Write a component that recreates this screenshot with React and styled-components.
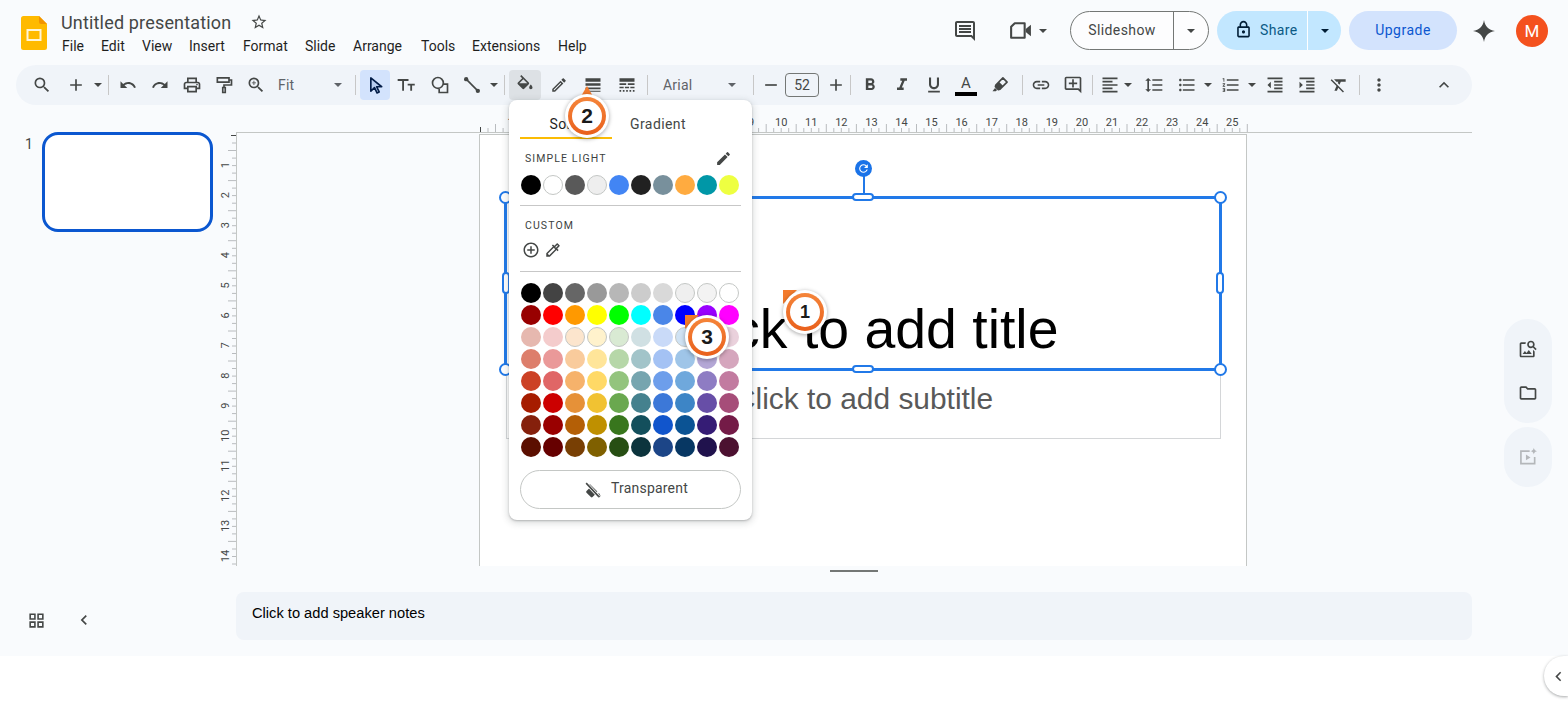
import React from "react";
import styled, { createGlobalStyle } from "styled-components";
import {
  MdSearch, MdAdd, MdUndo, MdRedo, MdOutlinePrint, MdZoomIn,
  MdOutlineEdit, MdLineWeight, MdLineStyle, MdFormatBold, MdFormatItalic, MdFormatUnderlined, MdLink,
  MdOutlineAddComment, MdFormatAlignLeft, MdFormatLineSpacing, MdFormatListBulleted, MdFormatListNumbered,
  MdFormatIndentDecrease, MdFormatIndentIncrease, MdFormatClear, MdMoreVert, MdExpandLess, MdOutlineComment,
  MdStarBorder, MdOutlineLock, MdOutlineGridView, MdChevronLeft, MdOutlineFolder,
  MdOutlineImageSearch, MdAddCircleOutline, MdOutlineColorize, MdEdit, MdRefresh, MdRemove,
} from "react-icons/md";

const Global = createGlobalStyle`
  html, body { margin: 0; padding: 0; background: #fff; }
  * { box-sizing: border-box; }
  body { font-family: Roboto, "Liberation Sans", sans-serif; }
`;

const Root = styled.div`
  position: relative;
  width: 1568px;
  height: 704px;
  overflow: hidden;
  display: flex;
  flex-direction: column;
  background: #f9fbfd;
`;

/* ---------- header ---------- */
const Header = styled.header`
  height: 65px;
  flex: none;
  display: flex;
  padding: 0 20px 0 21px;
`;
const Logo = styled.svg`
  width: 26px;
  height: 34px;
  margin-top: 16px;
  flex: none;
`;
const TitleBlock = styled.div`
  margin-left: 14px;
  padding-top: 11px;
`;
const TitleRow = styled.div`
  display: flex;
  align-items: center;
  height: 22px;
`;
const DocTitle = styled.span`
  font-size: 18px;
  color: #444746;
  width: 189px;
  letter-spacing: 0.17px;
`;
const Menu = styled.nav`
  display: flex;
  margin-top: 3px;
  margin-left: 1px;
`;
const MenuItem = styled.span`
  font-size: 14px;
  line-height: 20px;
  color: #1f1f1f;
  width: ${(p) => p.$w}px;
`;
const HeaderRight = styled.div`
  margin-left: auto;
  margin-top: 11px;
  height: 39px;
  display: flex;
  align-items: center;
`;
const Slot = styled.span`
  width: ${(p) => p.$w || 32}px;
  margin-left: ${(p) => p.$ml || 0}px;
  height: 30px;
  flex: none;
  display: flex;
  align-items: center;
  justify-content: center;
  color: ${(p) => p.$color || "#444746"};
  font-size: ${(p) => p.$size || 20}px;
`;
const SplitButton = styled.div`
  display: flex;
  height: 39px;
  border-radius: 20px;
  flex: none;
  overflow: hidden;
  margin-left: ${(p) => p.$ml}px;
`;
const SlideshowShell = styled(SplitButton)`
  border: 1px solid #747775;
  background: #fdfdfe;
  color: #444746;
`;
const SlideshowMain = styled.span`
  width: 103px;
  border-right: 1px solid #747775;
  display: flex;
  align-items: center;
  justify-content: center;
  font-size: 14px;
  letter-spacing: 0.4px;
  padding-bottom: 2px;
`;
const SlideshowDrop = styled.span`
  flex: 1;
  width: 34px;
  display: flex;
  align-items: center;
  justify-content: center;
`;
const ShareShell = styled(SplitButton)`
  background: #c2e7ff;
  color: #0b5a85;
`;
const ShareMain = styled.span`
  width: 91px;
  border-right: 1px solid #fff;
  display: flex;
  align-items: center;
  padding: 0 0 2px 17px;
  gap: 7px;
  font-size: 14px;
  letter-spacing: 0.35px;
  svg { color: #001d35; font-size: 19px; }
`;
const ShareDrop = styled.span`
  width: 33px;
  display: flex;
  align-items: center;
  justify-content: center;
  color: #001d35;
`;
const UpgradeBtn = styled.span`
  width: 108px;
  height: 39px;
  margin-left: 8px;
  padding-bottom: 2px;
  border-radius: 20px;
  background: #d3e3fd;
  color: #0b57d0;
  font-size: 14px;
  letter-spacing: 0.5px;
  display: flex;
  align-items: center;
  justify-content: center;
`;
const Avatar = styled.span`
  width: 32px;
  height: 32px;
  margin-left: 20px;
  border-radius: 50%;
  background: #f4511e;
  color: #fff;
  font-size: 17px;
  display: flex;
  align-items: center;
  justify-content: center;
`;

/* ---------- toolbar ---------- */
const Toolbar = styled.div`
  height: 40px;
  flex: none;
  margin: 0 96px 0 16px;
  padding-left: 10px;
  border-radius: 20px;
  background: #f0f4f9;
  display: flex;
  align-items: center;
`;
const Btn = styled.span`
  width: ${(p) => p.$w || 32}px;
  margin-left: ${(p) => p.$ml || 0}px;
  height: 30px;
  flex: none;
  border-radius: 4px;
  display: flex;
  align-items: center;
  justify-content: center;
  color: ${(p) => (p.$active === "blue" ? "#041e49" : "#444746")};
  background: ${(p) =>
    p.$active === "blue" ? "#d3e3fd" : p.$active === "grey" ? "#dde1e5" : "transparent"};
  font-size: ${(p) => p.$size || 20}px;
`;
const Sep = styled.span`
  width: 1px;
  height: 20px;
  flex: none;
  background: #c7c7c7;
  margin-left: ${(p) => p.$l}px;
  margin-right: ${(p) => p.$r}px;
`;
const SelectBox = styled.span`
  width: ${(p) => p.$w}px;
  height: 30px;
  flex: none;
  display: flex;
  align-items: center;
  justify-content: space-between;
  padding: 0 ${(p) => p.$pr}px 0 ${(p) => p.$pl}px;
  font-size: 14px;
  color: #5f6368;
  letter-spacing: 0.2px;
`;
const SizeInput = styled.span`
  width: 34px;
  height: 24px;
  flex: none;
  border: 1px solid #747775;
  border-radius: 4px;
  display: flex;
  align-items: center;
  justify-content: center;
  font-size: 14px;
  color: #444746;
`;
const TextColorBtn = styled(Btn)`
  flex-direction: column;
  justify-content: flex-start;
  font-size: 15px;
  line-height: 16px;
  padding-top: 5px;
`;
const ColorBar = styled.i`
  display: block;
  width: 22px;
  height: 4px;
  background: #000;
  margin-top: 1px;
`;

const CaretSvg = styled.svg`
  width: 8px;
  height: 4px;
  fill: currentColor;
  flex: none;
`;
const Caret = () => (
  <CaretSvg viewBox="0 0 8 4">
    <path d="M0 0h8L4 4z" />
  </CaretSvg>
);

/* ---------- main ---------- */
const Main = styled.div`
  height: 461px;
  flex: none;
  display: flex;
`;
const Filmstrip = styled.aside`
  width: 216px;
  flex: none;
  display: flex;
  padding: 27px 0 0 25px;
`;
const SlideNumber = styled.span`
  font-size: 14px;
  line-height: 22px;
  margin-top: 1px;
  color: #444746;
  width: 17px;
`;
const Thumb = styled.div`
  width: 171px;
  height: 100px;
  border: 3px solid #0b57d0;
  border-radius: 16px;
  background: #fff;
`;
const Workspace = styled.div`
  width: 1256px;
  flex: none;
  display: flex;
  flex-direction: column;
`;
const RulerH = styled.svg`
  display: block;
  width: 1236px;
  height: 28px;
  margin-left: 20px;
  flex: none;
`;
const WorkRow = styled.div`
  flex: 1;
  display: flex;
  min-height: 0;
`;
const RulerV = styled.svg`
  display: block;
  width: 21px;
  height: 433px;
  flex: none;
`;
const Canvas = styled.div`
  flex: 1;
  overflow: hidden;
  padding: 1px 0 0 242px;
`;
const Slide = styled.div`
  position: relative;
  width: 768px;
  height: 480px;
  background: #fff;
  border: 1px solid #c4c7c5;
`;
const TitleBox = styled.div`
  position: absolute;
  left: 24px;
  top: 61px;
  width: 718px;
  height: 175px;
  border: 3px solid #2179e8;
  display: flex;
  align-items: flex-end;
  justify-content: center;
  font-family: "Liberation Sans", Arial, sans-serif;
  font-size: 55.4px;
  line-height: 64px;
  color: #000;
  padding-bottom: 7px;
`;
const SubtitleBox = styled.div`
  position: absolute;
  left: 26px;
  top: 234px;
  width: 715px;
  height: 70px;
  border: 1px solid #d4d6d8;
  border-top: none;
  display: flex;
  justify-content: center;
  padding-top: 13px;
  font-family: "Liberation Sans", Arial, sans-serif;
  font-size: 29.9px;
  line-height: 34px;
  color: #595959;
`;
const Corner = styled.i`
  position: absolute;
  width: 13px;
  height: 13px;
  border-radius: 50%;
  background: #fff;
  border: 2px solid #2179e8;
  ${(p) => (p.$x === "l" ? "left: -8px;" : "right: -8px;")}
  ${(p) => (p.$y === "t" ? "top: -8px;" : "bottom: -8px;")}
`;
const PillH = styled.i`
  position: absolute;
  left: 345px;
  width: 22px;
  height: 8px;
  border-radius: 4px;
  background: #fff;
  border: 2px solid #2179e8;
  ${(p) => (p.$y === "t" ? "top: -6px;" : "bottom: -5px;")}
`;
const PillV = styled.i`
  position: absolute;
  top: 73px;
  width: 8px;
  height: 22px;
  border-radius: 4px;
  background: #fff;
  border: 2px solid #2179e8;
  ${(p) => (p.$x === "l" ? "left: -5px;" : "right: -5px;")}
`;
const RotateStem = styled.i`
  position: absolute;
  left: 355.5px;
  top: -23px;
  width: 2px;
  height: 17px;
  background: #2179e8;
`;
const RotateHandle = styled.span`
  position: absolute;
  left: 348px;
  top: -39px;
  width: 17px;
  height: 17px;
  border-radius: 50%;
  background: #1a73e8;
  color: #fff;
  font-size: 13px;
  display: flex;
  align-items: center;
  justify-content: center;
`;
const RailCol = styled.div`
  width: 96px;
  flex: none;
  padding: 214px 0 0 32px;
  display: flex;
  flex-direction: column;
  gap: 4px;
`;
const Rail = styled.div`
  width: 48px;
  height: ${(p) => p.$h}px;
  border-radius: 24px;
  background: #f0f4f9;
  display: flex;
  flex-direction: column;
  align-items: center;
  justify-content: center;
  gap: ${(p) => p.$gap || 0}px;
  font-size: 20px;
  color: ${(p) => p.$color || "#444746"};
`;
const RailIcon = styled.span`
  height: 20px;
  font-size: ${(p) => p.$size || 20}px;
  display: flex;
  align-items: center;
`;

/* ---------- notes ---------- */
const NotesBar = styled.div`
  height: 90px;
  flex: none;
  display: flex;
`;
const NotesLeft = styled.div`
  width: 236px;
  flex: none;
  display: flex;
  align-items: flex-start;
  padding: 44px 0 0 26px;
  color: #444746;
`;
const NotesLeftIcon = styled.span`
  width: ${(p) => p.$w}px;
  font-size: ${(p) => p.$size}px;
  margin-left: ${(p) => p.$ml || 0}px;
  height: 20px;
  display: flex;
  align-items: center;
  justify-content: center;
`;
const NotesCol = styled.div`
  flex: 1;
  margin-right: 96px;
  display: flex;
  flex-direction: column;
  align-items: center;
`;
const DragHandle = styled.i`
  width: 48px;
  height: 2px;
  margin-top: 4px;
  background: #747775;
`;
const NotesBox = styled.div`
  align-self: stretch;
  height: 48px;
  margin-top: 20px;
  border-radius: 8px;
  background: #f0f4f9;
  padding: 12px 16px;
  font-family: "Liberation Sans", Arial, sans-serif;
  font-size: 14.67px;
  line-height: 18px;
  color: #000;
`;
const Footer = styled.div`
  flex: 1;
  background: #fff;
  display: flex;
  justify-content: flex-end;
  align-items: flex-start;
`;
const SideToggle = styled.span`
  width: 24px;
  height: 40px;
  border-radius: 20px 0 0 20px;
  background: #fff;
  box-shadow: 0 1px 3px rgba(60, 64, 67, 0.45);
  display: flex;
  align-items: center;
  padding-left: 5px;
  color: #444746;
  font-size: 19px;
`;

/* ---------- fill popup ---------- */
const Popup = styled.div`
  position: absolute;
  left: 509px;
  top: 100px;
  width: 243px;
  height: 420px;
  background: #fff;
  border-radius: 8px;
  box-shadow: 0 2px 6px 2px rgba(60, 64, 67, 0.15), 0 1px 2px rgba(60, 64, 67, 0.3);
  padding: 0 11px;
`;
const Tabs = styled.div`
  display: flex;
  height: 40px;
`;
const Tab = styled.span`
  width: 92px;
  height: 39px;
  padding-top: 14px;
  text-align: center;
  font-size: 14px;
  line-height: 20px;
  letter-spacing: 0.4px;
  color: ${(p) => (p.$on ? "#1f1f1f" : "#444746")};
  border-bottom: 2px solid ${(p) => (p.$on ? "#fbbc04" : "transparent")};
`;
const LabelRow = styled.div`
  display: flex;
  align-items: center;
  justify-content: space-between;
  height: 16px;
  margin-top: ${(p) => p.$mt}px;
  padding: 0 9px 0 5px;
  font-size: 17px;
  color: #444746;
`;
const Label = styled.span`
  font-size: 10.5px;
  font-weight: 400;
  letter-spacing: 1.1px;
  color: #3c3f41;
`;
const SwatchGrid = styled.div`
  display: grid;
  grid-template-columns: repeat(10, 20px);
  gap: 2px;
  margin: ${(p) => p.$mt}px 0 0 1px;
`;
const Swatch = styled.i`
  display: block;
  width: 20px;
  height: 20px;
  border-radius: 50%;
  background: ${(p) => p.$c};
  border: ${(p) => (p.$edge ? "1px solid #c4c7c5" : "none")};
`;
const Divider = styled.hr`
  border: none;
  height: 1px;
  background: #c7c7c7;
  margin: ${(p) => p.$mt}px 0 0 0;
`;
const CustomRow = styled.div`
  display: flex;
  gap: 4px;
  margin: 8px 0 0 2px;
  height: 18px;
  color: #444746;
  font-size: 18px;
  align-items: center;
`;
const TransparentBtn = styled.div`
  height: 39px;
  margin-top: 13px;
  border: 1px solid #c4c7c5;
  border-radius: 20px;
  display: flex;
  align-items: center;
  justify-content: flex-start;
  gap: 9px;
  padding: 0 0 4px 62px;
  font-size: 14px;
  letter-spacing: 0.2px;
  color: #444746;
  svg { margin-top: 4px; }
`;

/* ---------- callouts ---------- */
const Callout = styled.div`
  position: absolute;
  left: ${(p) => p.$x}px;
  top: ${(p) => p.$y}px;
  width: 44px;
  height: 44px;
  &::before {
    content: "";
    position: absolute;
    background: #f47b2c;
    ${(p) =>
      p.$tip === "top"
        ? "left: 15px; top: -8px; width: 14px; height: 12px; clip-path: polygon(50% 0, 100% 100%, 0 100%);"
        : "left: 0; top: 0; width: 14px; height: 14px; clip-path: polygon(0 0, 100% 0, 0 100%);"}
  }
`;
const CalloutOuter = styled.div`
  position: relative;
  width: 44px;
  height: 44px;
  padding: 3px;
  border-radius: 50%;
  background: #fff;
  box-shadow: 0 1px 4px rgba(0, 0, 0, 0.35);
`;
const CalloutRing = styled.div`
  width: 38px;
  height: 38px;
  padding: 4px;
  border-radius: 50%;
  background: linear-gradient(#f5853a, #e9601c);
`;
const CalloutFace = styled.div`
  width: 30px;
  height: 30px;
  border-radius: 50%;
  background: #fff;
  display: flex;
  align-items: center;
  justify-content: center;
  font-family: "Liberation Sans", Arial, sans-serif;
  font-weight: 700;
  font-size: ${(p) => p.$size}px;
  color: #1a1a1a;
`;

/* ---------- data ---------- */
const THEME = ["#000000", "#ffffff", "#595959", "#eeeeee", "#4285f4", "#212121", "#78909c", "#ffab40", "#0097a7", "#eeff41"];
const PALETTE = [
  "#000000 #434343 #666666 #999999 #b7b7b7 #cccccc #d9d9d9 #efefef #f3f3f3 #ffffff",
  "#980000 #ff0000 #ff9900 #ffff00 #00ff00 #00ffff #4a86e8 #0000ff #9900ff #ff00ff",
  "#e6b8af #f4cccc #fce5cd #fff2cc #d9ead3 #d0e0e3 #c9daf8 #cfe2f3 #d9d2e9 #ead1dc",
  "#dd7e6b #ea9999 #f9cb9c #ffe599 #b6d7a8 #a2c4c9 #a4c2f4 #9fc5e8 #b4a7d6 #d5a6bd",
  "#cc4125 #e06666 #f6b26b #ffd966 #93c47d #76a5af #6d9eeb #6fa8dc #8e7cc3 #c27ba0",
  "#a61c00 #cc0000 #e69138 #f1c232 #6aa84f #45818e #3c78d8 #3d85c6 #674ea7 #a64d79",
  "#85200c #990000 #b45f06 #bf9000 #38761d #134f5c #1155cc #0b5394 #351c75 #741b47",
  "#5b0f00 #660000 #783f04 #7f6000 #274e13 #0c343d #1c4587 #073763 #20124d #4c1130",
].join(" ").split(" ");
const EDGED = new Set(["#ffffff", "#eeeeee", "#efefef", "#f3f3f3", "#fce5cd", "#fff2cc", "#d9ead3", "#cfe2f3"]);
const MENU = [["File", 39], ["Edit", 41], ["View", 47], ["Insert", 54], ["Format", 62], ["Slide", 48], ["Arrange", 68], ["Tools", 51], ["Extensions", 86], ["Help", 40]];

const UNIT = 30.07;

function HorizontalRuler() {
  const ticks = [];
  for (let i = 0; i <= 102; i++) {
    const x = 244.5 + (i * UNIT) / 4;
    const h = i % 4 === 2 ? 8 : 4;
    ticks.push(`M${x.toFixed(1)} 27V${27 - h}`);
  }
  const nums = [];
  for (let n = 1; n <= 25; n++) nums.push(n);
  return (
    <RulerH viewBox="0 0 1236 28">
      <path d={ticks.join("")} stroke="#b9bcbf" strokeWidth="1" fill="none" />
      <path d="M244.5 27V22" stroke="#444746" strokeWidth="1" />
      <rect x="0" y="27" width="1236" height="1" fill="#c4c7c5" />
      {nums.map((n) => (
        <text key={n} x={244.5 + n * UNIT} y="21" textAnchor="middle" fontFamily="Roboto, sans-serif" fontSize="11" fill="#444746">
          {n}
        </text>
      ))}
    </RulerH>
  );
}

function VerticalRuler() {
  const ticks = [];
  for (let i = 0; i <= 57; i++) {
    const y = 2.5 + (i * UNIT) / 4;
    const h = i % 4 === 2 ? 8 : 4;
    ticks.push(`M20 ${y.toFixed(1)}H${20 - h}`);
  }
  const nums = [];
  for (let n = 1; n <= 14; n++) nums.push(n);
  return (
    <RulerV viewBox="0 0 21 433">
      <path d={ticks.join("")} stroke="#b9bcbf" strokeWidth="1" fill="none" />
      <path d="M20 2.5H15" stroke="#444746" strokeWidth="1" />
      <rect x="20" y="0" width="1" height="433" fill="#c4c7c5" />
      {nums.map((n) => (
        <text
          key={n}
          transform={`translate(13 ${2 + n * UNIT}) rotate(-90)`}
          textAnchor="middle"
          fontFamily="Roboto, sans-serif"
          fontSize="11"
          fill="#444746"
        >
          {n}
        </text>
      ))}
    </RulerV>
  );
}

const IconSvg = ({ children, size = 20, ...rest }) => (
  <svg width={size} height={size} viewBox="0 0 24 24" fill="currentColor" {...rest}>
    {children}
  </svg>
);

const FillIcon = () => (
  <IconSvg>
    <path d="M16.56 8.94L7.62 0 6.21 1.41l2.38 2.38-5.15 5.15c-.59.59-.59 1.54 0 2.12l5.5 5.5c.29.29.68.44 1.06.44s.77-.15 1.06-.44l5.5-5.5c.59-.58.59-1.53 0-2.12zM5.21 10L10 5.21 14.79 10H5.21zM19 11.5s-2 2.17-2 3.5c0 1.1.9 2 2 2s2-.9 2-2c0-1.33-2-3.5-2-3.5z" />
  </IconSvg>
);
const TransparentIcon = () => (
  <IconSvg size={19}>
    <path d="M16.56 8.94L7.62 0 6.21 1.41l2.38 2.38-5.15 5.15c-.59.59-.59 1.54 0 2.12l5.5 5.5c.29.29.68.44 1.06.44s.77-.15 1.06-.44l5.5-5.5c.59-.58.59-1.53 0-2.12zM19 11.5s-2 2.17-2 3.5c0 1.1.9 2 2 2s2-.9 2-2c0-1.33-2-3.5-2-3.5z" transform="translate(1 5)" />
    <path d="M4 4l16 17" stroke="#fff" strokeWidth="4" />
    <path d="M4 4l16 17" stroke="currentColor" strokeWidth="2" />
  </IconSvg>
);
const CursorIcon = () => (
  <IconSvg>
    <path d="M7 3.5v16l4.4-4.3 3 6.3 2.6-1.2-3-6.2H20z" fill="#b8cdf0" stroke="currentColor" strokeWidth="2" strokeLinejoin="round" />
  </IconSvg>
);
const TextBoxIcon = () => (
  <IconSvg>
    <path d="M2 6h13M8.500 6v13M14 11.500h8.500M18.200 11.500V19" fill="none" stroke="currentColor" strokeWidth="2.200" />
  </IconSvg>
);
const ShapeIcon = () => (
  <IconSvg>
    <circle cx="9.5" cy="9.5" r="6.5" fill="none" stroke="currentColor" strokeWidth="2" />
    <path d="M15.5 11H21v10H11v-4.500" fill="none" stroke="currentColor" strokeWidth="2" />
  </IconSvg>
);
const LineIcon = () => (
  <IconSvg>
    <path d="M5 5l14 14" stroke="currentColor" strokeWidth="2" />
    <circle cx="5" cy="5" r="2.6" />
    <circle cx="19" cy="19" r="2.6" />
  </IconSvg>
);
const RollerIcon = () => (
  <IconSvg>
    <path d="M4 3.500h14v5H4zM18 6h3v6h-9v3M10.500 15h3v6h-3z" fill="none" stroke="currentColor" strokeWidth="2" />
  </IconSvg>
);
const HighlightIcon = () => (
  <IconSvg>
    <path d="M15.500 3.500l5 5-8.500 8.500-2 .5-3.500-3.500.5-2z" fill="none" stroke="currentColor" strokeWidth="2" strokeLinejoin="round" />
    <path d="M11 8.500l4.500 4.500-3.500 4-2 .5-3.500-3.500.5-2z" />
    <path d="M6 15.500l2.500 2.500-1.500 1.500H3z" />
  </IconSvg>
);
const CameraIcon = () => (
  <IconSvg size={25}>
    <path d="M6.500 5H16v14H3V8.500z" fill="none" stroke="currentColor" strokeWidth="2" strokeLinejoin="round" />
    <path d="M17 10.500l5-4v11l-5-4z" />
  </IconSvg>
);
const SparkIcon = () => (
  <IconSvg size={24}>
    <path d="M12 1c.9 6.300 4.700 10.100 11 11-6.300.9-10.100 4.700-11 11-.9-6.300-4.700-10.100-11-11 6.300-.9 10.100-4.700 11-11z" />
  </IconSvg>
);
const AiVideoIcon = () => (
  <IconSvg>
    <path d="M14 5H3.500v15H20v-8" fill="none" stroke="currentColor" strokeWidth="2" />
    <path d="M9.500 9v7l5.500-3.500z" />
    <path d="M19 1c.3 2.300 1.700 3.700 4 4-2.300.3-3.700 1.700-4 4-.3-2.300-1.700-3.700-4-4 2.300-.3 3.700-1.700 4-4z" />
  </IconSvg>
);

const CalloutMark = ({ x, y, n, tip, size }) => (
  <Callout $x={x} $y={y} $tip={tip}>
    <CalloutOuter>
      <CalloutRing>
        <CalloutFace $size={size}>{n}</CalloutFace>
      </CalloutRing>
    </CalloutOuter>
  </Callout>
);

export default function App() {
  return (
    <Root>
      <Global />
      <Header>
        <Logo viewBox="0 0 26 34">
          <path d="M2.500 0H18l8 8v23.500a2.500 2.500 0 0 1-2.500 2.500h-21A2.500 2.500 0 0 1 0 31.500v-29A2.500 2.500 0 0 1 2.500 0z" fill="#ffba00" />
          <path d="M18 0l8 8h-6a2 2 0 0 1-2-2z" fill="#f29400" />
          <rect x="6.500" y="14" width="13" height="10" fill="none" stroke="#fff" strokeOpacity="0.85" strokeWidth="2" />
        </Logo>
        <TitleBlock>
          <TitleRow>
            <DocTitle>Untitled presentation</DocTitle>
            <Slot $w={18} $size={18}><MdStarBorder /></Slot>
          </TitleRow>
          <Menu>
            {MENU.map(([t, w]) => (
              <MenuItem key={t} $w={w}>{t}</MenuItem>
            ))}
          </Menu>
        </TitleBlock>
        <HeaderRight>
          <Slot $size={24}><MdOutlineComment /></Slot>
          <Slot $ml={23}><CameraIcon /></Slot>
          <Slot $w={12} $ml={1}><Caret /></Slot>
          <SlideshowShell $ml={21}>
            <SlideshowMain>Slideshow</SlideshowMain>
            <SlideshowDrop><Caret /></SlideshowDrop>
          </SlideshowShell>
          <ShareShell $ml={8}>
            <ShareMain><MdOutlineLock />Share</ShareMain>
            <ShareDrop><Caret /></ShareDrop>
          </ShareShell>
          <UpgradeBtn>Upgrade</UpgradeBtn>
          <Slot $w={24} $ml={15}><SparkIcon /></Slot>
          <Avatar>M</Avatar>
        </HeaderRight>
      </Header>

      <Toolbar>
        <Btn><MdSearch /></Btn>
        <Btn $ml={2} $size={20}><MdAdd /></Btn>
        <Btn $w={12}><Caret /></Btn>
        <Sep $l={4} $r={3} />
        <Btn $size={18}><MdUndo /></Btn>
        <Btn $size={18}><MdRedo /></Btn>
        <Btn><MdOutlinePrint /></Btn>
        <Btn><RollerIcon /></Btn>
        <Btn><MdZoomIn /></Btn>
        <SelectBox $w={76} $pl={6} $pr={6}>Fit<Caret /></SelectBox>
        <Sep $l={7} $r={4} />
        <Btn $w={30} $active="blue"><CursorIcon /></Btn>
        <Btn><TextBoxIcon /></Btn>
        <Btn $ml={2}><ShapeIcon /></Btn>
        <Btn><LineIcon /></Btn>
        <Btn $w={12}><Caret /></Btn>
        <Sep $l={4} $r={4} />
        <Btn $active="grey"><FillIcon /></Btn>
        <Btn $ml={2} $size={18}><MdOutlineEdit /></Btn>
        <Btn $ml={2}><MdLineWeight /></Btn>
        <Btn $ml={2}><MdLineStyle /></Btn>
        <Sep $l={4} $r={3} />
        <SelectBox $w={98} $pl={12} $pr={13}>Arial<Caret /></SelectBox>
        <Sep $l={4} $r={3} />
        <Btn $w={28}><MdRemove /></Btn>
        <SizeInput>52</SizeInput>
        <Btn $w={28} $ml={3}><MdAdd /></Btn>
        <Sep $l={0} $r={3} />
        <Btn $size={20}><MdFormatBold /></Btn>
        <Btn $size={20}><MdFormatItalic /></Btn>
        <Btn><MdFormatUnderlined /></Btn>
        <TextColorBtn>A<ColorBar /></TextColorBtn>
        <Btn $ml={2} $size={18}><HighlightIcon /></Btn>
        <Sep $l={6} $r={2} />
        <Btn><MdLink /></Btn>
        <Btn><MdOutlineAddComment /></Btn>
        <Sep $l={3} $r={3} />
        <Btn $w={28}><MdFormatAlignLeft /></Btn>
        <Btn $w={8}><Caret /></Btn>
        <Btn $ml={6}><MdFormatLineSpacing /></Btn>
        <Btn $ml={1}><MdFormatListBulleted /></Btn>
        <Btn $w={10}><Caret /></Btn>
        <Btn $ml={2}><MdFormatListNumbered /></Btn>
        <Btn $w={10}><Caret /></Btn>
        <Btn $ml={2}><MdFormatIndentDecrease /></Btn>
        <Btn><MdFormatIndentIncrease /></Btn>
        <Btn><MdFormatClear /></Btn>
        <Sep $l={4} $r={3} />
        <Btn><MdMoreVert /></Btn>
        <Btn $ml={33}><MdExpandLess /></Btn>
      </Toolbar>

      <Main>
        <Filmstrip>
          <SlideNumber>1</SlideNumber>
          <Thumb />
        </Filmstrip>
        <Workspace>
          <HorizontalRuler />
          <WorkRow>
            <VerticalRuler />
            <Canvas>
              <Slide>
                <SubtitleBox>Click to add subtitle</SubtitleBox>
                <TitleBox>
                  Click to add title
                  <RotateStem />
                  <RotateHandle><MdRefresh /></RotateHandle>
                  <Corner $x="l" $y="t" />
                  <Corner $x="r" $y="t" />
                  <Corner $x="l" $y="b" />
                  <Corner $x="r" $y="b" />
                  <PillH $y="t" />
                  <PillH $y="b" />
                  <PillV $x="l" />
                  <PillV $x="r" />
                </TitleBox>
              </Slide>
            </Canvas>
          </WorkRow>
        </Workspace>
        <RailCol>
          <Rail $h={104} $gap={24}>
            <RailIcon $size={20}><MdOutlineImageSearch /></RailIcon>
            <RailIcon $size={20}><MdOutlineFolder /></RailIcon>
          </Rail>
          <Rail $h={60} $color="#b4b7ba">
            <RailIcon $size={20}><AiVideoIcon /></RailIcon>
          </Rail>
        </RailCol>
      </Main>

      <NotesBar>
        <NotesLeft>
          <NotesLeftIcon $w={20} $size={19}><MdOutlineGridView /></NotesLeftIcon>
          <NotesLeftIcon $w={20} $ml={28} $size={20}><MdChevronLeft /></NotesLeftIcon>
        </NotesLeft>
        <NotesCol>
          <DragHandle />
          <NotesBox>Click to add speaker notes</NotesBox>
        </NotesCol>
      </NotesBar>

      <Footer>
        <SideToggle><MdChevronLeft /></SideToggle>
      </Footer>

      <CalloutMark x={783} y={290} n="1" size={18} />

      <Popup>
        <Tabs>
          <Tab $on>Solid</Tab>
          <Tab>Gradient</Tab>
        </Tabs>
        <LabelRow $mt={10}>
          <Label>SIMPLE LIGHT</Label>
          <MdEdit />
        </LabelRow>
        <SwatchGrid $mt={9}>
          {THEME.map((c) => (
            <Swatch key={c} $c={c} $edge={EDGED.has(c)} />
          ))}
        </SwatchGrid>
        <Divider $mt={10} />
        <LabelRow $mt={11}>
          <Label>CUSTOM</Label>
        </LabelRow>
        <CustomRow>
          <MdAddCircleOutline />
          <MdOutlineColorize />
        </CustomRow>
        <Divider $mt={12} />
        <SwatchGrid $mt={11}>
          {PALETTE.map((c, i) => (
            <Swatch key={i} $c={c} $edge={EDGED.has(c)} />
          ))}
        </SwatchGrid>
        <TransparentBtn>
          <TransparentIcon />
          Transparent
        </TransparentBtn>
      </Popup>

      <CalloutMark x={565} y={94} n="2" tip="top" size={21} />
      <CalloutMark x={685} y={315} n="3" size={21} />
    </Root>
  );
}
